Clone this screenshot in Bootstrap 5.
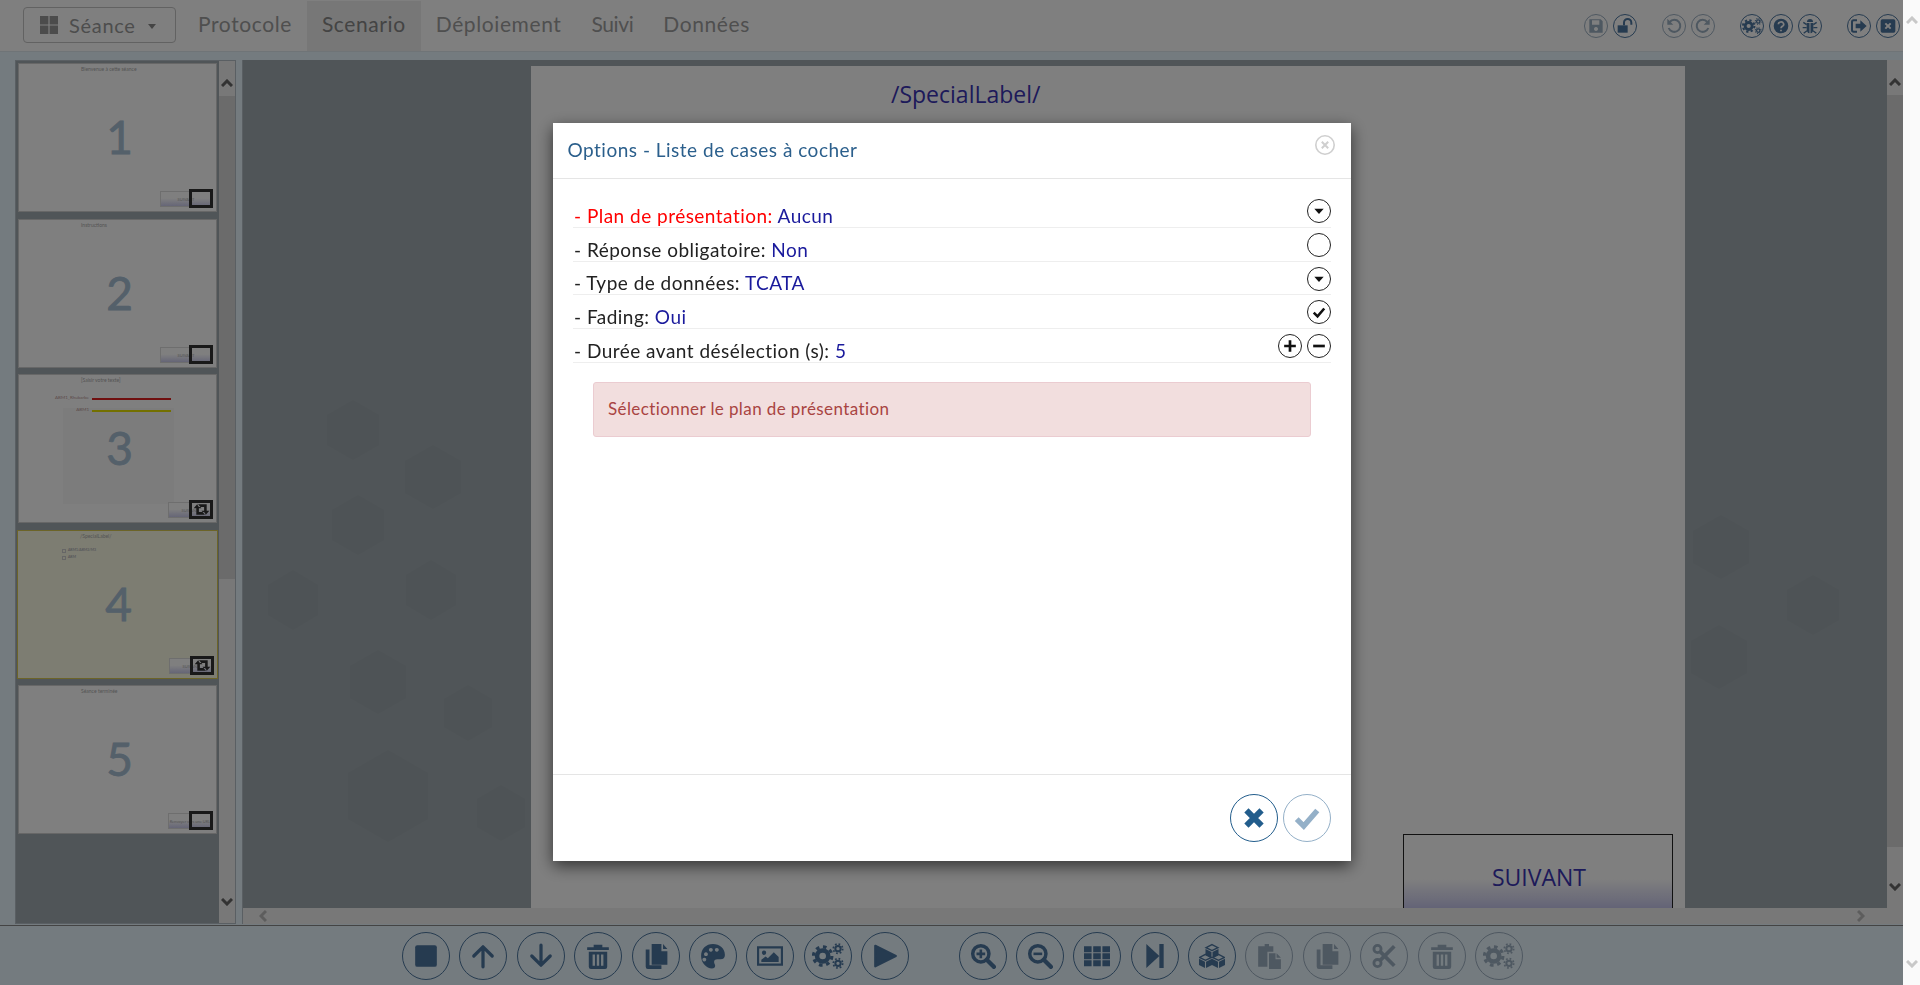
<!DOCTYPE html>
<html lang="fr">
<head>
  <meta charset="UTF-8" />
  <title>Scenario</title>
  <link href="https://cdn.jsdelivr.net/npm/bootstrap@5.3.0/dist/css/bootstrap.min.css" rel="stylesheet" />
  <style>
    html, body { height: 985px; overflow: hidden; }
    body { background: #fafafa; font-family: "Lato", "Liberation Sans", sans-serif; }
    .app-page { width: 1903px; height: 985px; background: #e9f6fe; }
    .page-scroll { width: 17px; height: 985px; color: #c8c8c8; padding: 16px 0 17px; }

    .top-bar { height: 52px; background: #fff; border-bottom: 1px solid #dfe9ef; padding: 0 3px 0 23px; }
    .session-btn { width: 153px; height: 36px; margin-top: -2px; font-size: 20px; color: #9a9a9a; border: 1px solid #c4c4c4; border-radius: 4px; padding: 0 0 0 16px; letter-spacing: .7px; }
    .session-btn .grid-ico { width: 18px; height: 18px; margin-right: 11px; }
    .session-btn .caret-ico { width: 0; height: 0; margin-left: 12px; margin-top: 3px; border-top: 5px solid #888; border-left: 4.5px solid transparent; border-right: 4.5px solid transparent; }
    .top-links { margin-left: 7px; }
    .top-link { display: block; height: 50px; line-height: 46px; padding: 0 15px; font-size: 21px; letter-spacing: .6px; color: #9e9e9e; text-decoration: none; }
    .top-link.active-link { background: #eee; color: #888; }
    .top-link.tight-link { letter-spacing: -.4px; }

    .round-ico { border: 1px solid currentColor; background: transparent; padding: 0; color: #4c76a0; flex: none; }
    .round-ico.off { color: #9db0c2; }
    .ico-24 { width: 24px; height: 24px; }
    .ico-24 svg { width: 16px; height: 16px; }
    .ico-24.wide-ico svg { width: 20px; height: 20px; }
    .ico-48 { width: 48px; height: 48px; }
    .ico-48 svg { width: 26px; height: 26px; }
    .ico-48.wide-ico svg { width: 32px; height: 32px; }
    .top-tools { gap: 25px; }
    .tool-group { gap: 5px; }

    .work-area { height: 874px; padding: 8px 0 1px 15px; gap: 6px; border-bottom: 1px solid #888; }
    .side-frame { width: 221px; background: #a0aab0; border: 1px solid #b4bfc6; }
    .thumb-list { width: 203px; padding: 2px 0 0 2px; gap: 6.5px; }
    .slide-thumb { width: 199px; height: 149px; background: #fff; border: 1px solid #cfcfcf; overflow: hidden; }
    .slide-thumb.selected { width: 201px; margin-left: -1px; background: #fafae4; border: 1px solid #d8c850; }
    .thumb-title { left: 62px; top: 2px; font-size: 5px; color: #aaa; white-space: nowrap; }
    .thumb-num { top: 48px; margin-left: 32px; width: 137px; text-align: center; font-size: 46px; line-height: 50px; color: #a8c0d4; -webkit-text-stroke: .8px #a8c0d4; }
    .thumb-next { right: 4px; bottom: 4px; width: 44px; height: 16px; font-size: 4px; line-height: 16px; text-align: center; color: #aaa; border: 1px solid #ddd; background: linear-gradient(#fff 45%, #ccccee); white-space: nowrap; }
    .thumb-next.wide { width: 52px; }
    .thumb-corner { right: 3px; bottom: 3px; width: 24px; height: 19px; border: 3px solid #333; color: #333; }
    .thumb-corner svg { width: 17px; height: 13px; }
    .thumb-well { left: 44px; top: 33px; width: 111px; height: 96px; background: #f8f8f8; }
    .thumb-bar { left: 73px; width: 79px; height: 2px; }
    .thumb-bar.bar-red { background: #e02020; }
    .thumb-bar.bar-yellow { background: #e6e000; }
    .thumb-tag { font-size: 4.5px; color: #b99; right: 127px; white-space: nowrap; }
    .thumb-check { left: 44px; width: 4px; height: 4px; border: 1px solid #ccc; }
    .thumb-check-label { left: 50px; font-size: 3.5px; color: #99a; white-space: nowrap; }

    .scroll-col { width: 16px; background: #f1f1f1; color: #666; }
    .scroll-cap { height: 35px; flex: none; }
    .scroll-cap.cap-top { padding-top: 9px; }
    .scroll-cap.cap-end { padding-bottom: 8px; }
    .scroll-grip { width: 16px; background: #d6d6d6; flex: none; }
    .chev-v { width: 12px; height: 8px; }

    .main-frame { width: 1661px; border-left: 1px solid #b4bfc6; }
    .slide-area { background: #a0aab0; overflow: hidden; }
    .hex-layer { left: 0; top: 0; }
    .slide-page { left: 288px; top: 6px; width: 1154px; height: 860px; background: #fff; }
    .slide-title { left: 360px; top: 11px; font-family: "Open Sans", "Liberation Sans", sans-serif; font-size: 23px; color: #3a34b4; }
    .next-block { left: 872px; top: 768px; width: 270px; height: 75px; border: 1px solid #222; background: linear-gradient(#fff 60%, #c8c8ee); font-family: "Open Sans", "Liberation Sans", sans-serif; font-size: 23px; color: #3a34b4; text-align: center; padding-top: 25px; padding-left: 2px; }
    .hscroll { height: 16px; background: #f1f1f1; color: #bbb; padding: 0 38px 0 16px; }
    .chev-h { width: 8px; height: 12px; }

    .bottom-bar { height: 59px; padding-left: 402px; gap: 9.4px; }
    .bottom-gap { margin-left: 40px; }

    .modal-backdrop.dim-layer { width: 1903px; height: 985px; opacity: .5; }
    .modal.sheet { width: 1903px; overflow: hidden; }
    .sheet .modal-dialog { max-width: 798px; margin: 123px auto 0; }
    .sheet .modal-content { height: 738px; border: 0; border-radius: 0; box-shadow: 0 5px 15px rgba(0,0,0,.6); }
    .sheet .modal-header { height: 56px; padding: 0 16px 0 15px; border-bottom: 1px solid #e5e5e5; border-radius: 0; }
    .sheet .modal-title { font-size: 19px; font-weight: 400; color: #2b5f8c; letter-spacing: .5px; }
    .close-ico { width: 20px; height: 20px; margin-top: -18px; border: 0; background: none; padding: 0; color: #cfcfcf; }
    .sheet .modal-body { padding: 15px 20px 0 20.5px; flex: 1; }
    .opt-row { height: 33.75px; border-bottom: 1px solid #eee; font-size: 19px; line-height: 21px; color: #222; padding: 0 0 1px 1px; letter-spacing: .48px; }
    .opt-row .opt-red { color: #f00; }
    .opt-row .opt-val { color: #1a1a9c; }
    .opt-btns { gap: 5px; align-self: flex-start; margin-top: 5px; }
    .opt-btn { width: 24px; height: 24px; border: 1.5px solid #222; background: #fff; padding: 0; color: #111; }
    .opt-btn svg { width: 14px; height: 14px; }
    .sheet .warn-box { margin: 19.5px 20px 0 19.5px; height: 55px; padding: 13px 14.5px; font-size: 17px; line-height: 25px; letter-spacing: .4px; color: #a94442; background: #f2dede; border: 1px solid #ebccd1; border-radius: 3px; }
    .sheet .modal-footer { padding: 19px 20px; gap: 5px; border-top: 1px solid #e5e5e5; border-radius: 0; }
    .sheet .modal-footer > * { margin: 0; }
    .foot-btn { background: #fff; color: #225d8c; }
    .foot-btn.off { color: #94b0c8; }
  </style>
</head>
<body>

<svg width="0" height="0" style="position:absolute">
  <defs>
    <symbol id="i-stop" viewBox="0 0 24 24"><rect x="2" y="2" width="20" height="20" rx="2" fill="currentColor"/></symbol>
    <symbol id="i-up" viewBox="0 0 24 24"><path d="M12 22V4M3.500 12L12 3.500 20.500 12" fill="none" stroke="currentColor" stroke-width="3" stroke-linecap="round" stroke-linejoin="round"/></symbol>
    <symbol id="i-down" viewBox="0 0 24 24"><path d="M12 2v18M3.500 12L12 20.500 20.500 12" fill="none" stroke="currentColor" stroke-width="3" stroke-linecap="round" stroke-linejoin="round"/></symbol>
    <symbol id="i-trash" viewBox="0 0 24 24"><path fill="currentColor" fill-rule="evenodd" d="M2 4h6V1.500h8V4h6v2.500H2zM3.500 8h17v14a2 2 0 0 1-2 2h-13a2 2 0 0 1-2-2zM7 10.500v10.500h2.200V10.500zM10.900 10.500v10.500h2.200V10.500zM14.800 10.500v10.500H17V10.500z"/></symbol>
    <symbol id="i-copy" viewBox="0 0 24 24"><path fill="currentColor" d="M2.500 6H6v14.500h11V24H4.500a2 2 0 0 1-2-2zM8 1h9v6.500h5.500V20H8zM18.500 1l4 4.500h-4z"/></symbol>
    <symbol id="i-palette" viewBox="0 0 24 24"><path fill="currentColor" fill-rule="evenodd" d="M12 1C5.500 1 1 5.500 1 12s5 11.500 10 11.500c2 0 3-1 3-2.500 0-1.500-1-2-1-3.500s1-2.500 3-2.500h3c2.500 0 4-1.500 4-4C23 5 18 1 12 1zM5.500 8.500a1.800 1.800 0 1 0 .01 0zM10 4.500a1.800 1.800 0 1 0 .01 0zM15.500 4.500a1.800 1.800 0 1 0 .01 0zM4 13.500a1.800 1.800 0 1 0 .01 0z"/></symbol>
    <symbol id="i-image" viewBox="0 0 24 24"><path fill="currentColor" fill-rule="evenodd" d="M0 3h24v18H0zM2 5v14h20V5z"/><circle cx="6.500" cy="9" r="2" fill="currentColor"/><path fill="currentColor" d="M4 17.500v-2l4-3 2 1.500 5.500-5.500 4.500 4.500v4.500z"/></symbol>
    <symbol id="i-cogs" viewBox="0 0 24 24"><g fill="none" stroke="currentColor"><circle cx="8" cy="12" r="4.200" stroke-width="3.400"/><circle cx="8" cy="12" r="6.900" stroke-width="2.400" stroke-dasharray="2.700 2.720"/><circle cx="19.500" cy="6.500" r="2" stroke-width="1.500"/><circle cx="19.500" cy="6.500" r="3.500" stroke-width="1.300" stroke-dasharray="1.300 1.450"/><circle cx="19.500" cy="17.500" r="2" stroke-width="1.500"/><circle cx="19.500" cy="17.500" r="3.500" stroke-width="1.300" stroke-dasharray="1.300 1.450"/></g></symbol>
    <symbol id="i-play" viewBox="0 0 24 24"><path fill="currentColor" stroke="currentColor" stroke-width="2" stroke-linejoin="round" d="M3 2.500L22 12 3 21.500z"/></symbol>
    <symbol id="i-zoomin" viewBox="0 0 24 24"><g fill="none" stroke="currentColor"><circle cx="10" cy="10" r="7.500" stroke-width="3.200"/><path d="M15.500 15.500L22 22" stroke-width="4" stroke-linecap="round"/><path d="M10 6v8M6 10h8" stroke-width="2.400"/></g></symbol>
    <symbol id="i-zoomout" viewBox="0 0 24 24"><g fill="none" stroke="currentColor"><circle cx="10" cy="10" r="7.500" stroke-width="3.200"/><path d="M15.500 15.500L22 22" stroke-width="4" stroke-linecap="round"/><path d="M6 10h8" stroke-width="2.400"/></g></symbol>
    <symbol id="i-th" viewBox="0 0 24 24"><path fill="currentColor" d="M0 3h7v5.500H0zM8.500 3h7v5.500h-7zM17 3h7v5.500h-7zM0 9.500h7V15H0zM8.500 9.500h7V15h-7zM17 9.500h7V15h-7zM0 16h7v5.500H0zM8.500 16h7v5.500h-7zM17 16h7v5.500h-7z"/></symbol>
    <symbol id="i-step" viewBox="0 0 24 24"><path fill="currentColor" d="M4 1l12 11L4 23zM16 1h4v22h-4z"/></symbol>
    <symbol id="i-cubes" viewBox="0 0 24 24"><g id="one-cube" fill="currentColor"><path d="M12 1.500l5.500 2.800L12 7 6.500 4.300z" fill="none" stroke="currentColor" stroke-width="1.300"/><path d="M6 5.500l5.500 2.700v5.800L6 11.200zM18 5.500l-5.500 2.700v5.800l5.500-2.800z"/></g><use href="#one-cube" x="-6" y="9"/><use href="#one-cube" x="6" y="9"/></symbol>
    <symbol id="i-paste" viewBox="0 0 24 24"><path fill="currentColor" d="M2 3h6V1h4v2h4v5h-5.500v14H2zM12 9.500h6V15h5v9H12zM19 9.500l4 4h-4z"/></symbol>
    <symbol id="i-cut" viewBox="0 0 24 24"><g fill="none" stroke="currentColor"><circle cx="6" cy="5.500" r="3.300" stroke-width="2.600"/><circle cx="6" cy="18.500" r="3.300" stroke-width="2.600"/><path d="M8.500 8L21.500 21M8.500 16L21.500 3" stroke-width="3.400"/></g></symbol>
    <symbol id="i-save" viewBox="0 0 24 24"><path fill="currentColor" fill-rule="evenodd" d="M2 2h17l3 3v17H2zM6 3.500V10h11V3.500zM12 13.500a3 3 0 1 0 .01 0z"/></symbol>
    <symbol id="i-unlock" viewBox="0 0 24 24"><path fill="currentColor" d="M1 11h15v11H1z"/><path d="M10.500 11V7a5.500 5.500 0 0 1 11 0v3" fill="none" stroke="currentColor" stroke-width="3"/></symbol>
    <symbol id="i-undo" viewBox="0 0 24 24"><path d="M5.500 6A9 9 0 1 1 4 15" fill="none" stroke="currentColor" stroke-width="3"/><path fill="currentColor" d="M2 1v9h9z"/></symbol>
    <symbol id="i-redo" viewBox="0 0 24 24"><path d="M18.500 6A9 9 0 1 0 20 15" fill="none" stroke="currentColor" stroke-width="3"/><path fill="currentColor" d="M22 1v9h-9z"/></symbol>
    <symbol id="i-help" viewBox="0 0 24 24"><circle cx="12" cy="12" r="11" fill="currentColor"/><path d="M8 9.500a4 3.500 0 1 1 6 3c-1.500 1-2 1.500-2 3M12 17.500v2.500" fill="none" stroke="#fff" stroke-width="2.600"/></symbol>
    <symbol id="i-bug" viewBox="0 0 24 24"><path fill="currentColor" d="M7.500 6a4.500 4.500 0 0 1 9 0zM7 7.500h4.200V23C8.500 22.500 7 20 7 16zM17 7.500h-4.200V23c2.700-.5 4.200-3 4.200-7z"/><path d="M7 10L2 6.500M7 14.500H1M7.500 19L2.500 23M17 10l5-3.500M17 14.500h6M16.500 19l5 4" fill="none" stroke="currentColor" stroke-width="2"/></symbol>
    <symbol id="i-signout" viewBox="0 0 24 24"><path d="M9 3.500H4A2.500 2.500 0 0 0 1.500 6v12A2.500 2.500 0 0 0 4 20.500h5" fill="none" stroke="currentColor" stroke-width="3"/><path fill="currentColor" d="M7 8.500h7V3.500l9.500 8.500-9.500 8.500v-5H7z"/></symbol>
    <symbol id="i-xbox" viewBox="0 0 24 24"><rect x="1" y="2" width="22" height="20" rx="2.500" fill="currentColor"/><path d="M8 8l8 8M16 8l-8 8" stroke="#fff" stroke-width="3"/></symbol>
    <symbol id="i-retweet" viewBox="0 0 24 20"><path fill="currentColor" d="M6 1l6 7H8v6h8l3 4H4V8H0zM18 19l6-7h-4V2H5l3 4h8v6h-4z"/></symbol>
    <symbol id="i-caret" viewBox="0 0 24 24"><path fill="currentColor" d="M4 8h16l-8 9z"/></symbol>
    <symbol id="i-check" viewBox="0 0 24 24"><path d="M3 13l6.500 6.500L21 6" fill="none" stroke="currentColor" stroke-width="4.400"/></symbol>
    <symbol id="i-plus" viewBox="0 0 24 24"><path d="M12 2v20M2 12h20" stroke="currentColor" stroke-width="4.600"/></symbol>
    <symbol id="i-minus" viewBox="0 0 24 24"><path d="M2 12h20" stroke="currentColor" stroke-width="4.600"/></symbol>
    <symbol id="i-cross" viewBox="0 0 24 24"><path d="M5 5l14 14M19 5L5 19" stroke="currentColor" stroke-width="5.500"/></symbol>
    <symbol id="i-tick" viewBox="0 0 24 24"><path d="M2.500 13l6.500 6.500L21.500 5" fill="none" stroke="currentColor" stroke-width="5"/></symbol>
    <symbol id="c-up" viewBox="0 0 12 8"><path d="M1 7l5-5 5 5" fill="none" stroke="currentColor" stroke-width="3"/></symbol>
    <symbol id="c-down" viewBox="0 0 12 8"><path d="M1 1l5 5 5-5" fill="none" stroke="currentColor" stroke-width="3"/></symbol>
    <symbol id="c-left" viewBox="0 0 8 12"><path d="M7 1L2 6l5 5" fill="none" stroke="currentColor" stroke-width="3"/></symbol>
    <symbol id="c-right" viewBox="0 0 8 12"><path d="M1 1l5 5-5 5" fill="none" stroke="currentColor" stroke-width="3"/></symbol>
  </defs>
</svg>

<div class="d-flex">
  <div class="app-page d-flex flex-column">

    <nav class="top-bar d-flex align-items-center justify-content-between">
      <div class="d-flex align-items-center">
        <button class="session-btn btn d-flex align-items-center" type="button">
          <svg class="grid-ico" viewBox="0 0 18 18"><path fill="#999" d="M0 0h8.400v8.400H0zM9.600 0H18v8.400H9.600zM0 9.600h8.400V18H0zM9.600 9.600H18V18H9.600z"/></svg>
          Séance<span class="caret-ico"></span>
        </button>
        <div class="top-links d-flex align-self-start">
          <a class="top-link" href="#">Protocole</a>
          <a class="top-link active-link" href="#">Scenario</a>
          <a class="top-link" href="#">Déploiement</a>
          <a class="top-link tight-link" href="#">Suivi</a>
          <a class="top-link" href="#">Données</a>
        </div>
      </div>
      <div class="top-tools d-flex">
        <div class="tool-group d-flex">
          <button class="round-ico off ico-24 rounded-circle d-flex align-items-center justify-content-center"><svg><use href="#i-save"/></svg></button>
          <button class="round-ico ico-24 rounded-circle d-flex align-items-center justify-content-center"><svg><use href="#i-unlock"/></svg></button>
        </div>
        <div class="tool-group d-flex">
          <button class="round-ico off ico-24 rounded-circle d-flex align-items-center justify-content-center"><svg><use href="#i-undo"/></svg></button>
          <button class="round-ico off ico-24 rounded-circle d-flex align-items-center justify-content-center"><svg><use href="#i-redo"/></svg></button>
        </div>
        <div class="tool-group d-flex">
          <button class="round-ico wide-ico ico-24 rounded-circle d-flex align-items-center justify-content-center"><svg><use href="#i-cogs"/></svg></button>
          <button class="round-ico ico-24 rounded-circle d-flex align-items-center justify-content-center"><svg><use href="#i-help"/></svg></button>
          <button class="round-ico ico-24 rounded-circle d-flex align-items-center justify-content-center"><svg><use href="#i-bug"/></svg></button>
        </div>
        <div class="tool-group d-flex">
          <button class="round-ico ico-24 rounded-circle d-flex align-items-center justify-content-center"><svg><use href="#i-signout"/></svg></button>
          <button class="round-ico ico-24 rounded-circle d-flex align-items-center justify-content-center"><svg><use href="#i-xbox"/></svg></button>
        </div>
      </div>
    </nav>

    <div class="work-area d-flex">
      <aside class="side-frame d-flex">
        <div class="thumb-list d-flex flex-column overflow-hidden">
          <div class="slide-thumb position-relative flex-shrink-0">
            <span class="thumb-title position-absolute">Bienvenue à cette séance</span>
            <div class="thumb-num position-absolute">1</div>
            <div class="thumb-next wide position-absolute">SUIVANT</div>
            <div class="thumb-corner position-absolute"></div>
          </div>
          <div class="slide-thumb position-relative flex-shrink-0">
            <span class="thumb-title position-absolute">Instructions</span>
            <div class="thumb-num position-absolute">2</div>
            <div class="thumb-next wide position-absolute">SUIVANT</div>
            <div class="thumb-corner position-absolute"></div>
          </div>
          <div class="slide-thumb position-relative flex-shrink-0">
            <div class="thumb-well position-absolute"></div>
            <span class="thumb-title position-absolute">[Saisir votre texte]</span>
            <span class="thumb-tag position-absolute" style="top:20px">ABM1_Rhubarbe</span>
            <div class="thumb-bar bar-red position-absolute" style="top:23px"></div>
            <span class="thumb-tag position-absolute" style="top:32px">ABM1</span>
            <div class="thumb-bar bar-yellow position-absolute" style="top:35px"></div>
            <div class="thumb-num position-absolute">3</div>
            <div class="thumb-next position-absolute">SUIVANT</div>
            <div class="thumb-corner position-absolute d-flex align-items-center justify-content-center"><svg><use href="#i-retweet"/></svg></div>
          </div>
          <div class="slide-thumb selected position-relative flex-shrink-0">
            <span class="thumb-title position-absolute">/SpecialLabel/</span>
            <div class="thumb-check position-absolute" style="top:18px"></div>
            <span class="thumb-check-label position-absolute" style="top:17px">ABM1/ABM2/M3</span>
            <div class="thumb-check position-absolute" style="top:25px"></div>
            <span class="thumb-check-label position-absolute" style="top:24px">ABM</span>
            <div class="thumb-num position-absolute">4</div>
            <div class="thumb-next position-absolute">SUIVANT</div>
            <div class="thumb-corner position-absolute d-flex align-items-center justify-content-center"><svg><use href="#i-retweet"/></svg></div>
          </div>
          <div class="slide-thumb position-relative flex-shrink-0">
            <span class="thumb-title position-absolute">Séance terminée</span>
            <div class="thumb-num position-absolute">5</div>
            <div class="thumb-next position-absolute">Renvoyer vers une URL</div>
            <div class="thumb-corner position-absolute"></div>
          </div>
        </div>
        <div class="scroll-col d-flex flex-column align-items-center ms-auto">
          <div class="scroll-cap cap-top d-flex align-items-center justify-content-center"><svg class="chev-v"><use href="#c-up"/></svg></div>
          <div class="scroll-grip" style="height:483px"></div>
          <div class="flex-grow-1"></div>
          <div class="scroll-cap cap-end d-flex align-items-center justify-content-center"><svg class="chev-v"><use href="#c-down"/></svg></div>
        </div>
      </aside>

      <section class="main-frame d-flex flex-column">
        <div class="d-flex flex-grow-1" style="min-height:0">
          <div class="slide-area position-relative flex-grow-1">
            <svg class="hex-layer position-absolute" width="1644" height="849" viewBox="0 0 1644 849">
              <g fill="#000" fill-opacity=".018">
                <path d="M110 340l26 15v30l-26 15-26-15v-30z"/>
                <path d="M115 435l26 15v30l-26 15-26-15v-30z"/>
                <path d="M190 385l28 16v32l-28 16-28-16v-32z"/>
                <path d="M50 510l25 15v30l-25 15-25-15v-30z"/>
                <path d="M188 500l25 15v30l-25 15-25-15v-30z"/>
                <path d="M225 625l24 14v28l-24 14-24-14v-28z"/>
                <path d="M258 725l24 14v28l-24 14-24-14v-28z"/>
                <path d="M135 590l28 16v32l-28 16-28-16v-32z"/>
                <path d="M145 690l40 23v46l-40 23-40-23v-46z"/>
                <path d="M1478 455l28 16v32l-28 16-28-16v-32z"/>
                <path d="M1476 565l28 16v32l-28 16-28-16v-32z"/>
                <path d="M1570 515l26 15v30l-26 15-26-15v-30z"/>
              </g>
            </svg>
            <div class="slide-page position-absolute">
              <div class="slide-title position-absolute">/SpecialLabel/</div>
              <div class="next-block position-absolute">SUIVANT</div>
            </div>
          </div>
          <div class="scroll-col d-flex flex-column align-items-center">
            <div class="scroll-cap cap-top d-flex align-items-center justify-content-center"><svg class="chev-v"><use href="#c-up"/></svg></div>
            <div class="scroll-grip" style="height:752px"></div>
            <div class="flex-grow-1"></div>
            <div class="scroll-cap cap-end d-flex align-items-center justify-content-center"><svg class="chev-v"><use href="#c-down"/></svg></div>
          </div>
        </div>
        <div class="hscroll d-flex align-items-center justify-content-between">
          <svg class="chev-h"><use href="#c-left"/></svg>
          <svg class="chev-h"><use href="#c-right"/></svg>
        </div>
      </section>
    </div>

    <footer class="bottom-bar d-flex align-items-center">
      <button class="round-ico ico-48 rounded-circle d-flex align-items-center justify-content-center"><svg><use href="#i-stop"/></svg></button>
      <button class="round-ico ico-48 rounded-circle d-flex align-items-center justify-content-center"><svg><use href="#i-up"/></svg></button>
      <button class="round-ico ico-48 rounded-circle d-flex align-items-center justify-content-center"><svg><use href="#i-down"/></svg></button>
      <button class="round-ico ico-48 rounded-circle d-flex align-items-center justify-content-center"><svg><use href="#i-trash"/></svg></button>
      <button class="round-ico ico-48 rounded-circle d-flex align-items-center justify-content-center"><svg><use href="#i-copy"/></svg></button>
      <button class="round-ico ico-48 rounded-circle d-flex align-items-center justify-content-center"><svg><use href="#i-palette"/></svg></button>
      <button class="round-ico ico-48 rounded-circle d-flex align-items-center justify-content-center"><svg><use href="#i-image"/></svg></button>
      <button class="round-ico wide-ico ico-48 rounded-circle d-flex align-items-center justify-content-center"><svg><use href="#i-cogs"/></svg></button>
      <button class="round-ico ico-48 rounded-circle d-flex align-items-center justify-content-center"><svg><use href="#i-play"/></svg></button>
      <button class="round-ico ico-48 bottom-gap rounded-circle d-flex align-items-center justify-content-center"><svg><use href="#i-zoomin"/></svg></button>
      <button class="round-ico ico-48 rounded-circle d-flex align-items-center justify-content-center"><svg><use href="#i-zoomout"/></svg></button>
      <button class="round-ico ico-48 rounded-circle d-flex align-items-center justify-content-center"><svg><use href="#i-th"/></svg></button>
      <button class="round-ico ico-48 rounded-circle d-flex align-items-center justify-content-center"><svg><use href="#i-step"/></svg></button>
      <button class="round-ico ico-48 rounded-circle d-flex align-items-center justify-content-center"><svg><use href="#i-cubes"/></svg></button>
      <button class="round-ico off ico-48 rounded-circle d-flex align-items-center justify-content-center"><svg><use href="#i-paste"/></svg></button>
      <button class="round-ico off ico-48 rounded-circle d-flex align-items-center justify-content-center"><svg><use href="#i-copy"/></svg></button>
      <button class="round-ico off ico-48 rounded-circle d-flex align-items-center justify-content-center"><svg><use href="#i-cut"/></svg></button>
      <button class="round-ico off ico-48 rounded-circle d-flex align-items-center justify-content-center"><svg><use href="#i-trash"/></svg></button>
      <button class="round-ico off wide-ico ico-48 rounded-circle d-flex align-items-center justify-content-center"><svg><use href="#i-cogs"/></svg></button>
    </footer>
  </div>

  <div class="page-scroll d-flex flex-column align-items-center justify-content-between">
    <svg class="chev-v"><use href="#c-up"/></svg>
    <svg class="chev-v"><use href="#c-down"/></svg>
  </div>
</div>

<div class="modal-backdrop dim-layer"></div>
<div class="modal sheet d-block" tabindex="-1">
  <div class="modal-dialog">
    <div class="modal-content">
      <div class="modal-header">
        <h5 class="modal-title">Options - Liste de cases à cocher</h5>
        <button class="close-ico" type="button" aria-label="Fermer">
          <svg viewBox="0 0 20 20"><circle cx="10" cy="10" r="9.200" fill="none" stroke="currentColor" stroke-width="1.600"/><path d="M6.800 6.800l6.400 6.400M13.200 6.800l-6.400 6.400" stroke="currentColor" stroke-width="2"/></svg>
        </button>
      </div>
      <div class="modal-body">
        <div class="opt-row d-flex justify-content-between align-items-end">
          <span><span class="opt-red">- Plan de présentation:</span> <span class="opt-val">Aucun</span></span>
          <div class="opt-btns d-flex"><button class="opt-btn rounded-circle d-flex align-items-center justify-content-center"><svg><use href="#i-caret"/></svg></button></div>
        </div>
        <div class="opt-row d-flex justify-content-between align-items-end">
          <span>- Réponse obligatoire: <span class="opt-val">Non</span></span>
          <div class="opt-btns d-flex"><button class="opt-btn rounded-circle"></button></div>
        </div>
        <div class="opt-row d-flex justify-content-between align-items-end">
          <span>- Type de données: <span class="opt-val">TCATA</span></span>
          <div class="opt-btns d-flex"><button class="opt-btn rounded-circle d-flex align-items-center justify-content-center"><svg><use href="#i-caret"/></svg></button></div>
        </div>
        <div class="opt-row d-flex justify-content-between align-items-end">
          <span>- Fading: <span class="opt-val">Oui</span></span>
          <div class="opt-btns d-flex"><button class="opt-btn rounded-circle d-flex align-items-center justify-content-center"><svg><use href="#i-check"/></svg></button></div>
        </div>
        <div class="opt-row d-flex justify-content-between align-items-end">
          <span>- Durée avant désélection (s): <span class="opt-val">5</span></span>
          <div class="opt-btns d-flex">
            <button class="opt-btn rounded-circle d-flex align-items-center justify-content-center"><svg><use href="#i-plus"/></svg></button>
            <button class="opt-btn rounded-circle d-flex align-items-center justify-content-center"><svg><use href="#i-minus"/></svg></button>
          </div>
        </div>
        <div class="alert alert-danger warn-box" role="alert">Sélectionner le plan de présentation</div>
      </div>
      <div class="modal-footer">
        <button class="round-ico foot-btn ico-48 rounded-circle d-flex align-items-center justify-content-center"><svg><use href="#i-cross"/></svg></button>
        <button class="round-ico foot-btn off ico-48 rounded-circle d-flex align-items-center justify-content-center"><svg><use href="#i-tick"/></svg></button>
      </div>
    </div>
  </div>
</div>

</body>
</html>
